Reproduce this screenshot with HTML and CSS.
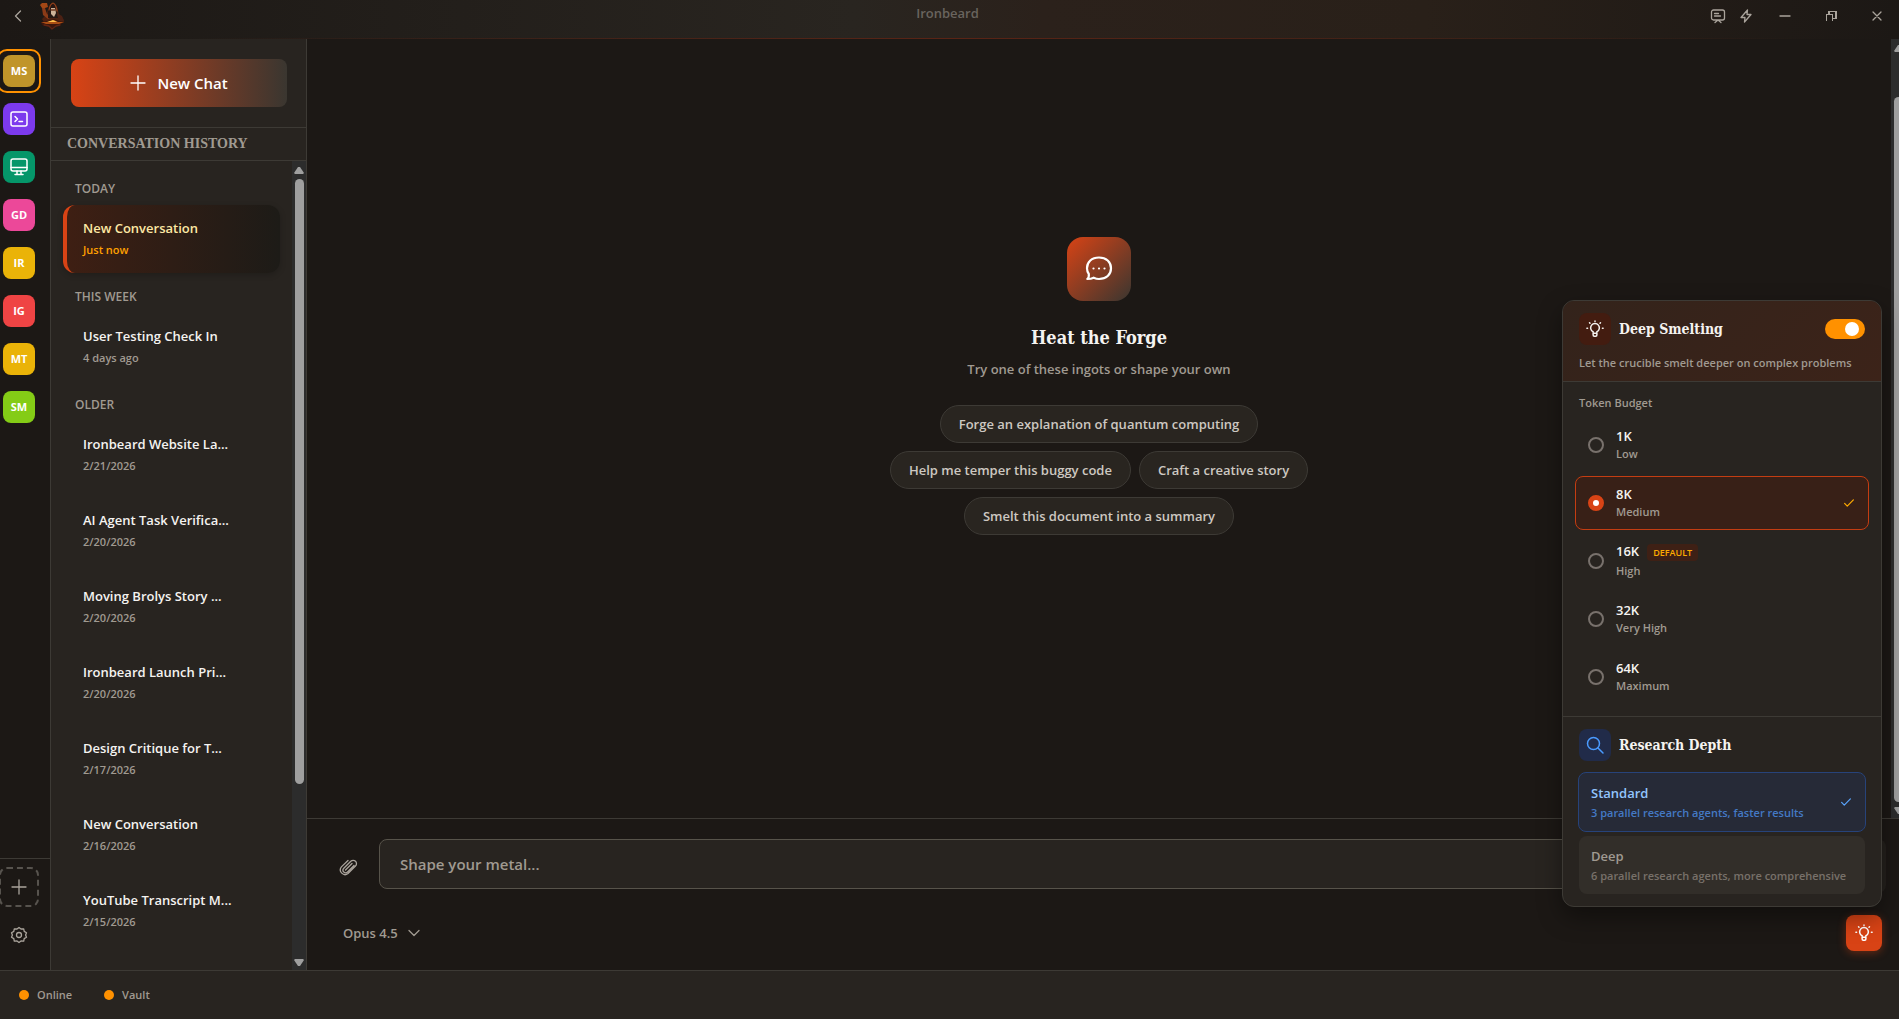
FILE: index.html
```html
<!DOCTYPE html>
<html lang="en">
<head>
<meta charset="utf-8">
<title>Ironbeard</title>
<link rel="stylesheet" href="styles.css">
</head>
<body>
<svg class="defs" aria-hidden="true">
  <symbol id="bulb" viewBox="0 0 24 24"><path d="M9.500 17.500v-1.800a5.800 5.800 0 1 1 5 0v1.800M9.500 17.500V20a1.500 1.500 0 0 0 1.500 1.500h2a1.500 1.500 0 0 0 1.500-1.500v-2.500zM12 1.200v.8M4.700 3.700l.6.6M19.300 3.700l-.6.6M1.200 11h.9M21.900 11h.9"/></symbol>
  <symbol id="check" viewBox="0 0 16 16"><path d="M3 8.500l3 3 7-7"/></symbol>
</svg>
<div class="app">
  <header class="titlebar">
    <div class="titlebar-side">
      <button class="icon-btn back" aria-label="Back"><svg width="16" height="16" viewBox="0 0 16 16"><path d="M10.500 3l-5 5 5 5"/></svg></button>
      <svg class="logo" width="26" height="28" viewBox="0 0 26 28">
        <path d="M9 7Q10 2 14 1q4 1 5 7l1 5 4 3 1 4-4 2H6l-3-5 4-4z" fill="#4d2010"/>
        <path d="M1 3l2-2 5 0 1 4-3 1-3 0z" fill="#a34715"/><path d="M3 6l1 7 5 4 3-2-4-3-2-6z" fill="#8b3b17"/>
        <path d="M9 10q0-7 5-8 4 2 4 8l1 6H9z" fill="#261713"/><path d="M10 8q1-6 4-7 3 1 4 8" fill="none" stroke="#94421c" stroke-width="1.200"/>
        <path d="M12 6h4l1 5-2 4-3-3z" fill="#cfb399"/><path d="M12 8h4" stroke="#6c3820"/>
        <path d="M18 11l5 3 2 5-5 1z" fill="#4b2114"/><path d="M2 20l7-1 6-2 5 2 5 1-4 3-5 1-3 3-5-3-5-1z" fill="#3a160c"/>
        <path d="M2 20l8 0 5-2 4 2h6l-5 2H7z" fill="#a94d14"/><path d="M8 20l6-2 4 2z" fill="#ffc04a"/><path d="M5 23l5 1 3 3 4-3 4-1" fill="none" stroke="#5f2414"/>
      </svg>
    </div>
    <div class="app-name">Ironbeard</div>
    <div class="titlebar-side right">
      <button class="icon-btn" aria-label="Feedback"><svg width="16" height="16" viewBox="0 0 16 16"><path d="M3.500 2h9a2 2 0 0 1 2 2v6a2 2 0 0 1-2 2h-9a2 2 0 0 1-2-2V4a2 2 0 0 1 2-2zM5 14.500l3-2.500 3 2.500M4.500 5.500h4M4.500 8h6"/></svg></button>
      <button class="icon-btn bolt" aria-label="Quick actions"><svg width="16" height="16" viewBox="0 0 16 16"><path d="M9.500 2L3 9.500h4L6.500 14 13 6.500H9z"/></svg></button>
      <button class="icon-btn" aria-label="Minimize"><svg width="12" height="12" viewBox="0 0 12 12"><path d="M1 6h10"/></svg></button>
      <button class="icon-btn" aria-label="Restore"><svg width="12" height="12" viewBox="0 0 12 12" shape-rendering="crispEdges"><path d="M1.500 10.500v-6h6v6M4 4V1.500h7v7H8"/></svg></button>
      <button class="icon-btn" aria-label="Close"><svg width="12" height="12" viewBox="0 0 12 12"><path d="M2 2l8 8M10 2l-8 8"/></svg></button>
    </div>
  </header>

  <div class="body">
    <nav class="rail" aria-label="Workspaces">
      <div class="rail-list">
        <button class="space active"><span class="tile ms">MS</span></button>
        <button class="space" aria-label="Terminal"><span class="tile violet"><svg width="20" height="20" viewBox="0 0 20 20"><rect x="2" y="3" width="16" height="14" rx="2"/><path d="M6 7.500L8.500 10 6 12.500M10 12.500h3.500"/></svg></span></button>
        <button class="space" aria-label="Desktop"><span class="tile green"><svg width="20" height="20" viewBox="0 0 20 20"><rect x="2" y="2" width="16" height="12" rx="2"/><path d="M2 10.500h16M8 14v3M12 14v3M6 17.500h8"/></svg></span></button>
        <button class="space"><span class="tile pink">GD</span></button>
        <button class="space"><span class="tile yellow">IR</span></button>
        <button class="space"><span class="tile red">IG</span></button>
        <button class="space"><span class="tile yellow">MT</span></button>
        <button class="space"><span class="tile lime">SM</span></button>
      </div>
      <div class="rail-foot">
        <button class="add" aria-label="Add workspace"><svg width="16" height="16" viewBox="0 0 16 16"><path d="M8 1v14M1 8h14"/></svg></button>
        <button class="icon-btn gear" aria-label="Settings"><svg width="18" height="18" viewBox="0 0 18 18"><path d="M9 1.500l2 1.500 2.700-.1.500 2.500 2.300 1.400L15.600 9l.9 2.200-2.300 1.400-.5 2.500L11 15l-2 1.500L7 15l-2.700.1-.5-2.500-2.300-1.400L2.400 9l-.9-2.200 2.300-1.400.5-2.500L7 3z"/><circle cx="9" cy="9" r="2.500"/></svg></button>
      </div>
    </nav>

    <aside class="sidebar">
      <div class="new-wrap"><button class="new-chat"><svg width="16" height="16" viewBox="0 0 16 16"><path d="M8 1v14M1 8h14"/></svg>New Chat</button></div>
      <h2 class="history-title">CONVERSATION HISTORY</h2>
      <div class="history">
        <div class="history-list">
          <h3 class="group">TODAY</h3>
          <button class="conv current"><span class="conv-name">New Conversation</span><span class="conv-date">Just now</span></button>
          <h3 class="group">THIS WEEK</h3>
          <button class="conv"><span class="conv-name">User Testing Check In</span><span class="conv-date">4 days ago</span></button>
          <h3 class="group">OLDER</h3>
          <button class="conv"><span class="conv-name">Ironbeard Website La...</span><span class="conv-date">2/21/2026</span></button>
          <button class="conv"><span class="conv-name">AI Agent Task Verifica...</span><span class="conv-date">2/20/2026</span></button>
          <button class="conv"><span class="conv-name">Moving Brolys Story ...</span><span class="conv-date">2/20/2026</span></button>
          <button class="conv"><span class="conv-name">Ironbeard Launch Pri...</span><span class="conv-date">2/20/2026</span></button>
          <button class="conv"><span class="conv-name">Design Critique for T...</span><span class="conv-date">2/17/2026</span></button>
          <button class="conv"><span class="conv-name">New Conversation</span><span class="conv-date">2/16/2026</span></button>
          <button class="conv"><span class="conv-name">YouTube Transcript M...</span><span class="conv-date">2/15/2026</span></button>
        </div>
        <div class="scroll" aria-hidden="true">
          <svg width="10" height="8" viewBox="0 0 10 8"><path d="M4 1h2l4 6-1 1H1L0 7z"/></svg>
          <div class="track"><div class="thumb"></div></div>
          <svg width="10" height="8" viewBox="0 0 10 8"><path d="M4 7h2l4-6-1-1H1L0 1z"/></svg>
        </div>
      </div>
    </aside>

    <main class="main">
      <div class="chat">
        <section class="welcome">
          <div class="welcome-icon"><svg width="30" height="30" viewBox="0 0 30 30"><path d="M15 3.500c7.300 0 12 4.500 12 10.800s-4.700 10.700-12 10.700c-2 0-3.800-.6-5.300-1.300-1.600.8-3.700 1.300-6.400 1.300 1.700-1.500 1.700-3.500 1.500-5A10 10 0 0 1 3 14.300C3 8 7.700 3.500 15 3.500z"/><path class="dots" d="M9.500 14.500h.01M15 14.500h.01M20.500 14.500h.01"/></svg></div>
          <h1>Heat the Forge</h1>
          <p>Try one of these ingots or shape your own</p>
          <div class="pills">
            <button>Forge an explanation of quantum computing</button>
            <button>Help me temper this buggy code</button>
            <button>Craft a creative story</button>
            <button>Smelt this document into a summary</button>
          </div>
        </section>
        <div class="scroll main-scroll" aria-hidden="true">
          <svg width="10" height="8" viewBox="0 0 10 8"><path d="M4 1h2l4 6-1 1H1L0 7z"/></svg>
          <div class="track"><div class="thumb"></div></div>
          <svg width="10" height="8" viewBox="0 0 10 8"><path d="M4 7h2l4-6-1-1H1L0 1z"/></svg>
        </div>
      </div>
      <div class="composer">
        <div class="input-row">
          <button class="icon-btn clip" aria-label="Attach file"><svg width="20" height="20" viewBox="0 0 20 20"><path d="M15 8.500L8.500 15a2.600 2.600 0 0 1-3.700-3.700l7-7a3.300 3.300 0 0 1 4.700 4.700l-7.500 7.500a4.700 4.700 0 0 1-6.600-6.600L9 3.500M6.500 13l6.500-6.500" /></svg></button>
          <input class="prompt" type="text" placeholder="Shape your metal..." aria-label="Message">
          <button class="send" aria-label="Send"></button>
        </div>
        <div class="tool-row">
          <button class="model">Opus 4.5<svg width="12" height="12" viewBox="0 0 12 12"><path d="M1 3.500l5 5 5-5"/></svg></button>
          <div class="smelt">
            <button class="lamp" aria-label="Deep Smelting"><svg width="18" height="18"><use href="#bulb"/></svg></button>
            <section class="popup">
              <div class="pop-head">
                <div class="pop-title">
                  <span class="badge warm"><svg width="18" height="18"><use href="#bulb"/></svg></span>
                  <h2 id="deep">Deep Smelting</h2>
                  <input class="toggle" type="checkbox" checked aria-labelledby="deep">
                </div>
                <p>Let the crucible smelt deeper on complex problems</p>
              </div>
              <fieldset class="budget">
                <legend>Token Budget</legend>
                <label class="opt"><input type="radio" name="budget"><span class="opt-text"><b>1K</b><small>Low</small></span></label>
                <label class="opt chosen"><input type="radio" name="budget" checked><span class="opt-text"><b>8K</b><small>Medium</small></span><svg class="tick" width="14" height="14"><use href="#check"/></svg></label>
                <label class="opt"><input type="radio" name="budget"><span class="opt-text"><b>16K<i>DEFAULT</i></b><small>High</small></span></label>
                <label class="opt"><input type="radio" name="budget"><span class="opt-text"><b>32K</b><small>Very High</small></span></label>
                <label class="opt"><input type="radio" name="budget"><span class="opt-text"><b>64K</b><small>Maximum</small></span></label>
              </fieldset>
              <div class="research">
                <div class="pop-title">
                  <span class="badge cool"><svg width="20" height="20" viewBox="0 0 20 20"><circle cx="8.500" cy="8.500" r="6"/><path d="M13 13l5 5"/></svg></span>
                  <h2>Research Depth</h2>
                </div>
                <button class="depth on"><span><b>Standard</b><small>3 parallel research agents, faster results</small></span><svg class="tick" width="14" height="14"><use href="#check"/></svg></button>
                <button class="depth"><span><b>Deep</b><small>6 parallel research agents, more comprehensive</small></span></button>
              </div>
            </section>
          </div>
        </div>
      </div>
    </main>
  </div>

  <footer class="status"><span>Online</span><span>Vault</span></footer>
</div>
</body>
</html>
```
FILE: styles.css
```css
* { box-sizing: border-box; margin: 0; padding: 0; }
:root {
  --bg: #1c1815; --panel: #282420; --line: #3d3a35; --muted: #a09a91; --text: #f5f3f0;
  --ember: #d84315; --gold: #ff9100;
}
body { background: var(--bg); color: var(--text); font: 600 13px/20px "Open Sans", "Noto Sans", sans-serif; overflow: hidden; }
button, input { font: inherit; color: inherit; background: none; border: 0; }
button { cursor: pointer; }
svg { fill: none; stroke: currentColor; stroke-linecap: round; stroke-linejoin: round; stroke-width: 1.3; flex: none; }
.defs { display: none; }
h1, h2 { font-family: "DejaVu Serif Condensed", "DejaVu Serif", serif; font-stretch: condensed; }
.app { display: flex; flex-direction: column; height: 100vh; }

.titlebar {
  display: grid; grid-template-columns: 1fr auto 1fr; height: 39px; padding: 0 8px 0 4px;
  background: linear-gradient(90deg, #1c1815, #292520 45%, #2b211b 55%, #292019 75%, #1c1815);
  border-bottom: 1px solid; border-image: linear-gradient(90deg, transparent 10%, #5a2415 50%, transparent 95%) 1;
}
.titlebar-side { display: flex; align-items: center; height: 32px; gap: 7px; color: #b3afaa; }
.titlebar-side.right { justify-content: flex-end; gap: 18px; }
.icon-btn { display: grid; place-items: center; width: 28px; height: 28px; color: #aaa49c; }
.titlebar .bolt { margin: 0 -7px 0 -18px; }
.logo { stroke: none; }
.app-name { color: #69645e; line-height: 26px; }

.body { display: flex; flex: 1; min-height: 0; }
.rail { display: flex; flex-direction: column; justify-content: space-between; width: 51px; border-right: 1px solid var(--line); overflow: hidden; }
.rail-list, .rail-foot { display: flex; flex-direction: column; align-items: center; padding: 10px 12px 0 0; gap: 4px; }
.space { width: 44px; height: 44px; padding: 4px; border: 2px solid transparent; border-radius: 10px; flex: none; }
.space.active { border-color: var(--gold); }
.tile { display: grid; place-items: center; width: 32px; height: 32px; border-radius: 8px; color: #fff; font-size: 11px; font-weight: 700; }
.tile svg { stroke-width: 1.5; }
.ms { background: #c0952a; }
.violet { background: #7c3aed; }
.green { background: #059669; }
.pink { background: #ec4899; }
.yellow { background: #eab308; }
.red { background: #ef4444; }
.lime { background: #84cc16; }
.rail-foot { border-top: 1px solid var(--line); padding-top: 8px; padding-bottom: 21px; gap: 14px; }
.add { display: grid; place-items: center; width: 40px; height: 40px; border: 2px dashed #57534e; border-radius: 8px; color: #aaa49c; flex: none; }

.sidebar { display: flex; flex-direction: column; width: 256px; background: var(--panel); border-right: 1px solid var(--line); flex: none; }
.new-wrap { padding: 20px 19px 20px 20px; }
.new-chat { display: flex; align-items: center; justify-content: center; gap: 11px; width: 100%; height: 48px; border-radius: 8px; font-size: 15px; color: #fff; background: linear-gradient(90deg, var(--ember), #3a3630); }
.history-title { border: 1px solid var(--line); border-width: 1px 0; padding: 0 16px; font-family: "Liberation Serif", serif; font-size: 14px; line-height: 32px; color: var(--muted); white-space: nowrap; }
.history { display: flex; flex: 1; min-height: 0; }
.history-list { flex: 1; padding: 12px 12px 0; overflow: hidden; }
.group { padding-left: 12px; font-size: 12px; font-weight: 600; line-height: 32px; color: var(--muted); }
.conv { display: block; width: 217px; height: 68px; margin-bottom: 8px; padding: 0 16px; border-left: 4px solid transparent; border-radius: 12px; text-align: left; }
.conv span { display: block; }
.conv-name { line-height: 22px; }
.conv-date { font-size: 11px; line-height: 22px; color: var(--muted); }
.current { background: linear-gradient(90deg, #3e1f13, #1d1b17); border-color: var(--ember); box-shadow: 0 2px 6px #0003; }
.current .conv-name { color: #fde8a4; }
.current .conv-date { color: #ffa000; }
.scroll { display: flex; flex-direction: column; align-items: center; width: 14px; padding: 5px 0 3px; background: #2c2c2c; }
.scroll svg { fill: #9f9f9f; stroke: none; }
.track { flex: 1; width: 9px; padding: 5px 0; min-height: 0; }
.thumb { height: 78%; background: #9f9f9f; border-radius: 5px; }

.main { display: flex; flex-direction: column; flex: 1; min-width: 0; }
.chat { display: flex; flex: 1; min-height: 0; }
.welcome { flex: 1; display: flex; flex-direction: column; align-items: center; justify-content: center; padding-bottom: 86px; text-align: center; }
.welcome-icon { display: grid; place-items: center; width: 64px; height: 64px; border-radius: 16px; background: linear-gradient(135deg, var(--ember), #3a3630); color: #fff; }
.welcome-icon svg { stroke-width: 2.2; }
h1 { margin-top: 24px; font-size: 18px; line-height: 26px; }
.welcome p { margin: 8px 0 26px; color: var(--muted); }
.pills { display: flex; flex-wrap: wrap; justify-content: center; gap: 8px; max-width: 448px; }
.pills button { height: 38px; padding: 0 18px; border: 1px solid var(--line); border-radius: 19px; background: #292520; color: #cdc8c1; }
.main-scroll { width: 8px; overflow: hidden; align-items: flex-start; padding-left: 3px; }
.main-scroll .track { padding: 45px 0 5px; }
.main-scroll .thumb { height: 100%; }

.composer { border-top: 1px solid var(--line); }
.input-row { display: flex; align-items: flex-start; gap: 16px; padding: 20px 13px 20px 28px; }
.clip { margin-top: 14px; }
.prompt { flex: 1; height: 50px; padding: 0 20px; border: 1px solid #57534a; border-radius: 8px; background: var(--panel); font-size: 15px; }
.prompt::placeholder { color: #a09a91; opacity: 1; }
.send { width: 48px; height: 54px; border-radius: 8px; background: #25211d; }
.tool-row { display: flex; justify-content: space-between; padding: 2px 17px 19px 36px; }
.model { display: flex; align-items: center; gap: 10px; color: var(--muted); }
.smelt { position: relative; }
.lamp { display: grid; place-items: center; width: 36px; height: 36px; border-radius: 8px; background: var(--ember); color: #fff; box-shadow: 0 2px 8px #d8431566; }
.lamp svg, .badge svg { stroke-width: 2; }

.popup { position: absolute; right: 0; bottom: calc(100% + 8px); width: 320px; background: var(--panel); border: 1px solid var(--line); border-radius: 12px; overflow: hidden; box-shadow: 0 10px 24px #0006; }
.pop-head { padding: 12px 16px 8px; background: linear-gradient(135deg, #33231b, #3c2319); border-bottom: 1px solid var(--line); }
.pop-title { display: flex; align-items: center; gap: 8px; }
.pop-title h2 { flex: 1; font-size: 14px; }
.badge { display: grid; place-items: center; width: 32px; height: 32px; border-radius: 8px; }
.warm { background: #431c10; }
.cool { background: #212b49; color: #4a9bff; }
.badge.cool svg { stroke-width: 1.5; }
.toggle { appearance: none; display: flex; justify-content: flex-end; width: 40px; height: 20px; padding: 3px 6px; border-radius: 10px; background: var(--gold); }
.toggle::before { content: ""; width: 14px; height: 14px; border-radius: 50%; background: #fff; }
.pop-head p { margin-top: 8px; color: var(--muted); font-size: 11px; white-space: nowrap; }
.budget { border: 0; display: flex; flex-direction: column; gap: 4px; padding: 0 12px 12px; border-bottom: 1px solid var(--line); }
.budget legend { padding: 11px 4px 5px; font-size: 11px; color: var(--muted); }
.opt { display: flex; align-items: center; gap: 12px; height: 54px; padding: 0 12px; border: 1px solid transparent; border-radius: 8px; }
.chosen { background: #382017; border-color: #c43d12; }
.opt input { appearance: none; width: 16px; height: 16px; border: 2px solid #78716c; border-radius: 50%; }
.opt input:checked { border: 5px solid var(--ember); background: #fff; }
.opt-text { flex: 1; }
b, small { display: block; line-height: 18px; font-weight: 600; }
small { font-size: 11px; color: var(--muted); }
b i { margin-left: 8px; padding: 2px 6px; border-radius: 4px; background: #3e2015; color: #ffab00; font-size: 9px; font-style: normal; }
.tick { color: #ffab00; stroke-width: 1.4; }
.research { display: flex; flex-direction: column; padding: 12px 15px; gap: 4px; }
.research .pop-title { margin: 0 1px 7px; }
.depth { display: flex; justify-content: space-between; align-items: center; height: 58px; margin: 0 1px; padding: 0 12px; border-radius: 8px; background: #322e29; text-align: left; color: var(--muted); white-space: nowrap; }
.depth b { line-height: 22px; }
.depth small { color: #78716a; }
.depth.on { height: 60px; margin: 0; background: #262a37; border: 1px solid #27437a; color: #93c5fd; }
.depth.on small { color: #4479c5; }
.depth .tick { color: #5aa4fc; }

.status { display: flex; align-items: center; gap: 32px; height: 49px; padding: 0 19px; background: var(--panel); border-top: 1px solid var(--line); font-size: 11px; color: var(--muted); flex: none; }
.status span { display: flex; align-items: center; gap: 8px; }
.status span::before { content: ""; width: 10px; height: 10px; border-radius: 50%; background: var(--gold); }
```
